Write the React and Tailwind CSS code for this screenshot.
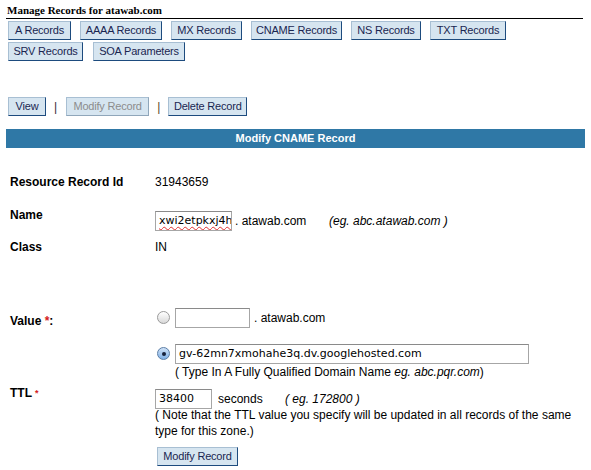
const tabs1 = [
  ['A Records', 'w-[63px]'],
  ['AAAA Records', 'w-[82px]'],
  ['MX Records', 'w-[71px]'],
  ['CNAME Records', 'w-[91px]'],
  ['NS Records', 'w-[70px]'],
  ['TXT Records', 'w-[76px]'],
];
const tabs2 = [
  ['SRV Records', 'w-[75px]'],
  ['SOA Parameters', 'w-[92px]'],
];

function Btn({ children, disabled, w = '' }) {
  return (
    <div
      className={
        `${w} h-[19px] flex items-center justify-center bg-[#d6e5f0] border border-t-[#a8bfd3] border-l-[#a8bfd3] text-[11px] tracking-[-0.2px] leading-none whitespace-nowrap ` +
        (disabled
          ? 'border-r-[#8fa6ba] border-b-[#8fa6ba] text-[#8c8c8c]'
          : 'border-r-[#1d4b7e] border-b-[#1d4b7e] text-[#1a2550]')
      }
    >
      {children}
    </div>
  );
}

function Radio({ checked }) {
  return (
    <div
      className={
        'w-[13px] h-[13px] rounded-full border flex items-center justify-center shrink-0 ' +
        (checked
          ? 'border-[#5b7ea6] bg-gradient-to-b from-[#cfe2f7] to-[#7fb0e6]'
          : 'border-[#9a9a9a] bg-gradient-to-b from-white to-[#d9d9d9]')
      }
    >
      {checked && <div className="w-[4px] h-[4px] rounded-full bg-[#16213b]" />}
    </div>
  );
}

function Field({ w, children }) {
  return (
    <div
      className={`${w} h-[20px] border border-[#a6a6a6] border-t-[#8a8a8a] bg-white px-[3px] flex items-center overflow-hidden whitespace-nowrap text-[11px] font-['DejaVu_Sans'] text-black`}
    >
      {children}
    </div>
  );
}

export default function App() {
  return (
    <div className="w-[591px] h-[470px] bg-white px-[6px] font-['Liberation_Sans',Arial,sans-serif] text-[12px] text-black overflow-hidden">
      {/* header */}
      <div className="h-[18px] pt-[4px] pl-[1px] font-['Liberation_Serif',serif] font-bold text-[11px] leading-[13px]">
        Manage Records for atawab.com
      </div>
      <div className="h-px bg-black w-[577px]" />

      <div className="mt-[2px] pl-[2px] flex gap-[9px]">
        {tabs1.map(([t, w]) => (
          <Btn key={t} w={w}>{t}</Btn>
        ))}
      </div>
      <div className="mt-[2px] pl-[2px] flex gap-[10px]">
        {tabs2.map(([t, w]) => (
          <Btn key={t} w={w}>{t}</Btn>
        ))}
      </div>

      <div className="mt-[36px] pl-[2px] flex items-center">
        <Btn w="w-[38px]">View</Btn>
        <span className="ml-[8px] mr-[9px] text-[#3a2a3a] text-[12px]">|</span>
        <Btn w="w-[83px]" disabled>Modify Record</Btn>
        <span className="ml-[8px] mr-[8px] text-[#5a4a2a] text-[12px]">|</span>
        <Btn w="w-[79px]">Delete Record</Btn>
      </div>

      <div className="mt-[13px] h-[19px] bg-[#2f78a6] text-white font-bold text-[11px] flex items-center justify-center">
        Modify CNAME Record
      </div>

      {/* form */}
      <div className="leading-[14px]">
        <div className="mt-[27px] flex">
          <div className="w-[149px] pl-[4px] font-bold">Resource Record Id</div>
          <div>31943659</div>
        </div>

        <div className="mt-[19px] flex items-start">
          <div className="w-[149px] pl-[4px] font-bold">Name</div>
          <div className="pt-[3px] flex items-center">
            <Field w="w-[77px]">
              <span className="underline decoration-wavy decoration-[#e03030] decoration-1 underline-offset-2">xwi2etpkxj4h</span>
            </Field>
            <span className="ml-[3px] w-[94px]">. atawab.com</span>
            <span className="italic">(eg. abc.atawab.com )</span>
          </div>
        </div>

        <div className="mt-[9px] flex">
          <div className="w-[149px] pl-[4px] font-bold">Class</div>
          <div>IN</div>
        </div>

        <div className="mt-[54px] flex items-start">
          <div className="w-[149px] pl-[4px] pt-[6px] font-bold">
            Value <span className="text-[#d42020]">*</span>:
          </div>
          <div>
            <div className="flex items-center h-[19px]">
              <div className="ml-[2px] mr-[5px]">
                <Radio />
              </div>
              <Field w="w-[75px]" />
              <span className="ml-[4px]">. atawab.com</span>
            </div>
            <div className="mt-[17px] flex items-center h-[19px]">
              <div className="ml-[2px] mr-[5px]">
                <Radio checked />
              </div>
              <Field w="w-[354px]">gv-62mn7xmohahe3q.dv.googlehosted.com</Field>
            </div>
            <div className="mt-[2px] pl-[20px]">
              ( Type In A Fully Qualified Domain Name <span className="italic">eg. abc.pqr.com</span>)
            </div>
          </div>
        </div>

        <div className="mt-[7px] flex items-start">
          <div className="w-[149px] pl-[4px] font-bold">
            TTL<span className="ml-[3px] text-[#d42020] text-[9px] align-top">*</span>
          </div>
          <div>
            <div className="pt-[3px] flex items-center">
              <Field w="w-[57px]">38400</Field>
              <span className="ml-[6px] w-[67px]">seconds</span>
              <span className="italic">( eg. 172800 )</span>
            </div>
            <div className="mt-[-2px] leading-[16px] w-[425px]">
              ( Note that the TTL value you specify will be updated in all records of the same type for this zone.)
            </div>
            <div className="mt-[8px] ml-[2px] flex">
              <Btn w="w-[81px]">Modify Record</Btn>
            </div>
          </div>
        </div>
      </div>
    </div>
  );
}
